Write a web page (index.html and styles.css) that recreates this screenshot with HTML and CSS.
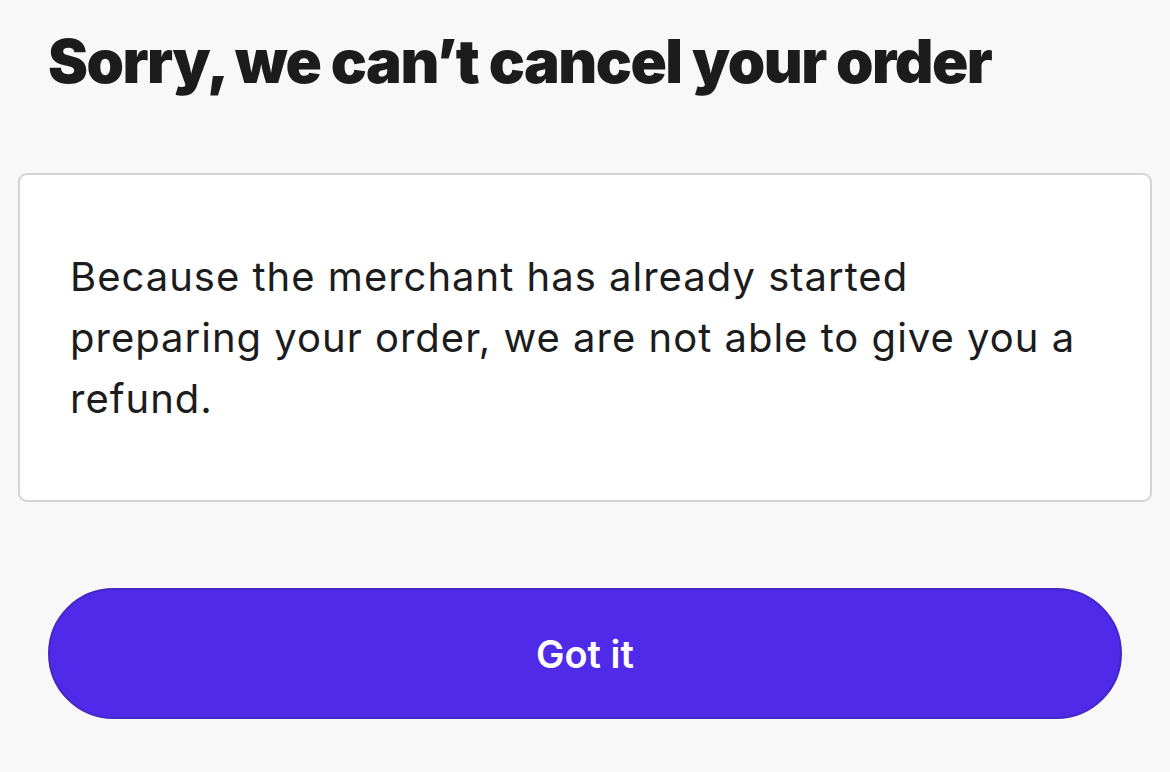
FILE: index.html
```html
<!DOCTYPE html>
<html lang="en">
<head>
    <meta charset="UTF-8">
    <title>Cancel order</title>
    <link rel="stylesheet" href="styles.css">
</head>
<body>
    <h1 class="titulo">Sorry, we can’t cancel your order</h1>

    <div class="aviso">
        <p>Because the merchant has already started preparing your order, we are not able to give you a refund.</p>
    </div>

    <button class="boton">Got it</button>
</body>
</html>
```

FILE: styles.css
```css
body {
    margin: 0;
    background-color: #f8f8f8;
    font-family: Inter, "Noto Sans", sans-serif;
    color: #1c1c1c;
}
.titulo {
    margin: 0;
    padding: 26px 0 0 48px;
    font-size: 60px;
    line-height: 70px;
    font-weight: 900;
    letter-spacing: -1.5px;
}
.aviso {
    margin: 77px 18px 0 18px;
    padding: 71px 50px 71px 50px;
    background-color: #ffffff;
    border: 2px solid #d4d4d4;
    border-radius: 9px;
}
.aviso p {
    margin: 0;
    font-size: 40px;
    line-height: 61px;
    letter-spacing: 1px;
}
.boton {
    display: block;
    width: calc(100% - 96px);
    height: 131px;
    margin: 86px 48px 0 48px;
    background-color: #4f2ae8;
    border: 2px solid #4527c4;
    border-radius: 66px;
    color: white;
    font-family: Inter, "Noto Sans", sans-serif;
    font-size: 38px;
    font-weight: 600;
}
```
